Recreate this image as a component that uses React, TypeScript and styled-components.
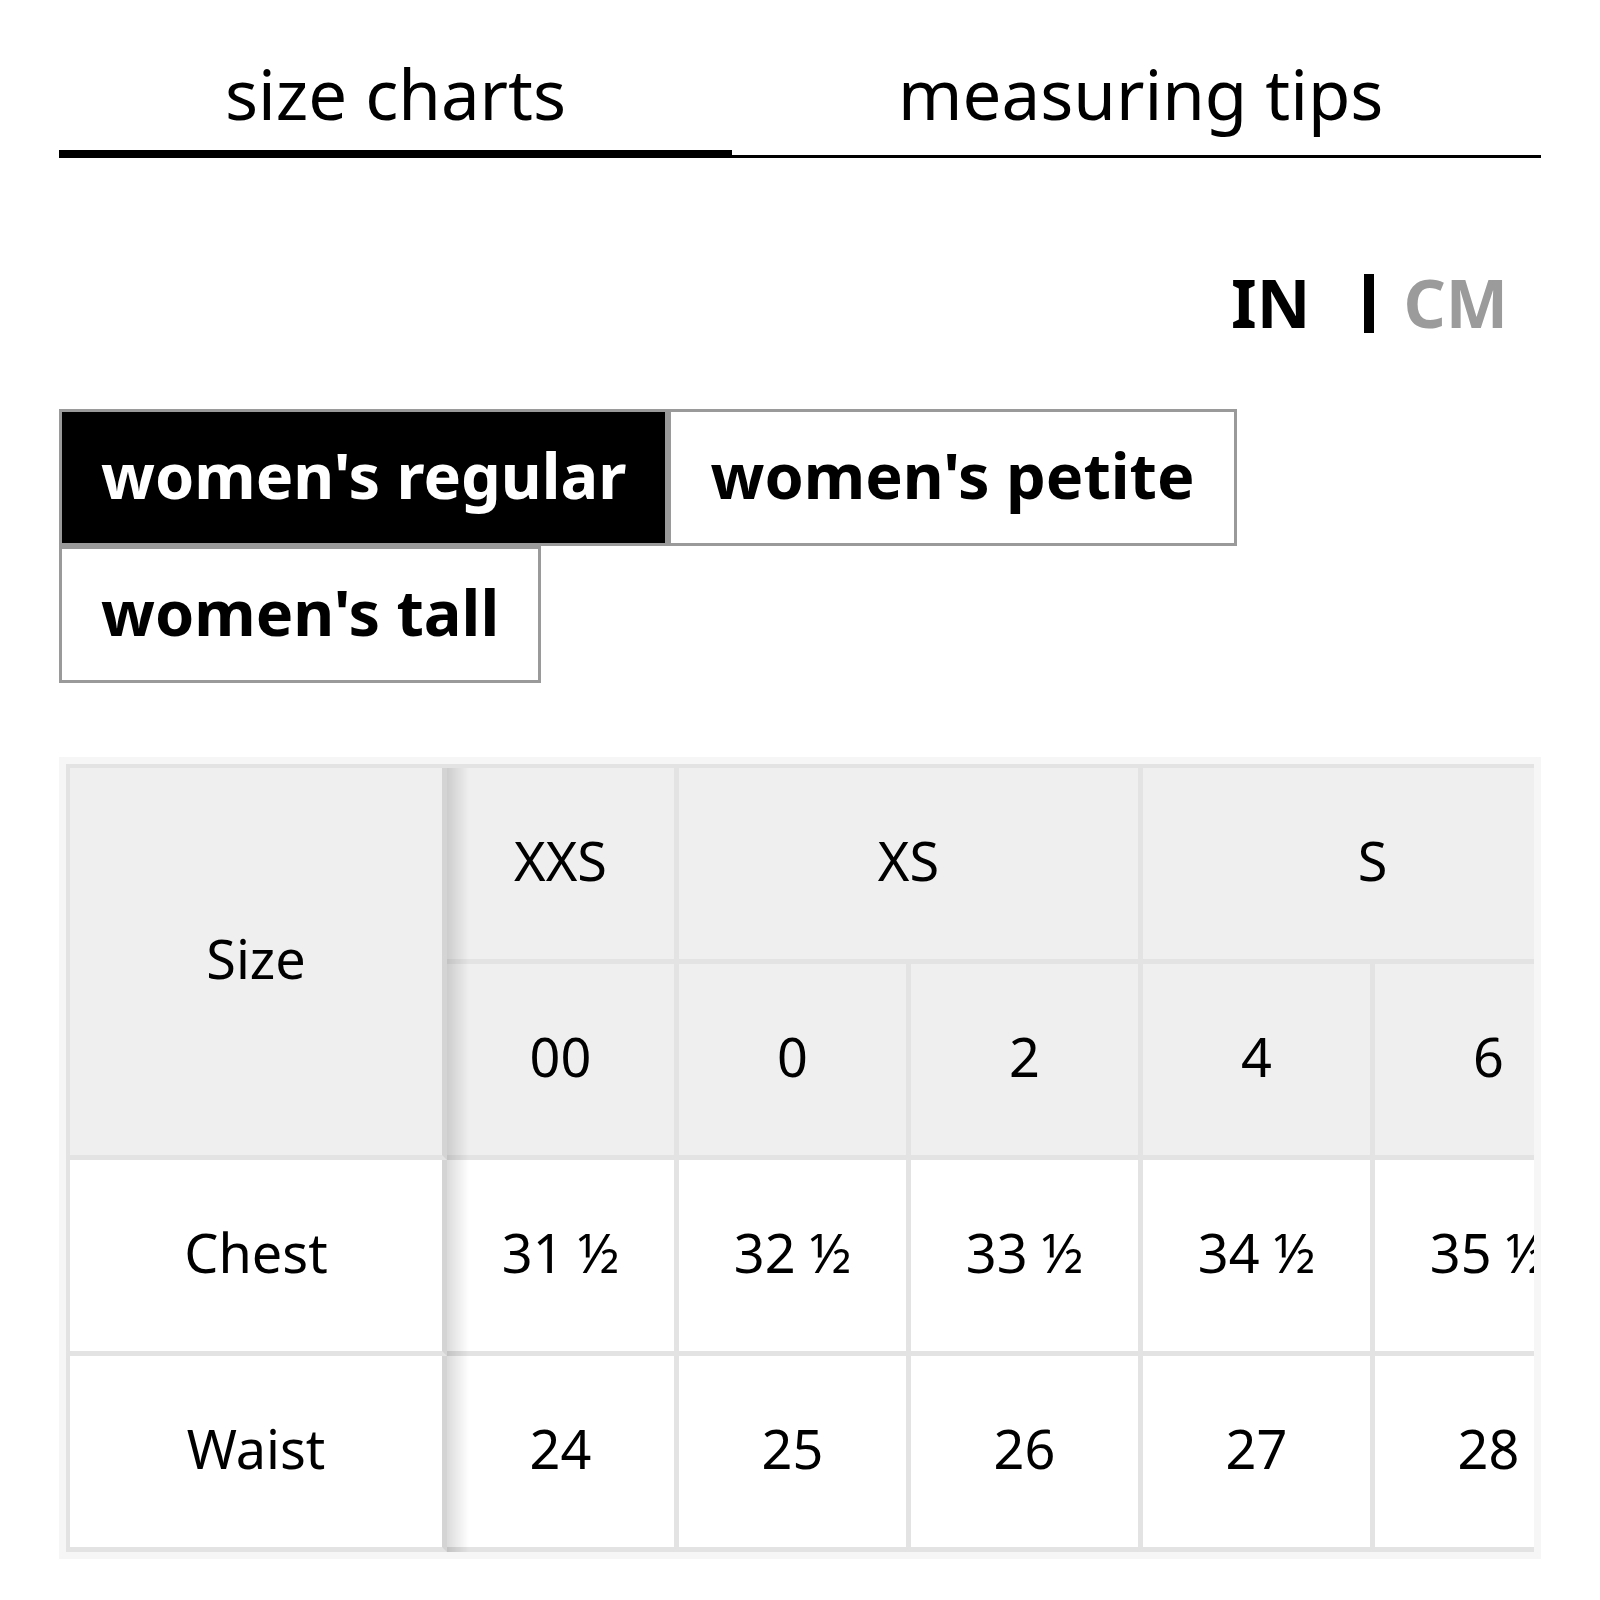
import styled, { createGlobalStyle } from "styled-components";

const GlobalStyle = createGlobalStyle`
  html, body {
    margin: 0;
    padding: 0;
    background: #fff;
  }
  body {
    font-family: "Noto Sans", "Open Sans", sans-serif;
    color: #000;
  }
`;

const Page = styled.div`
  width: 1600px;
  box-sizing: border-box;
  padding: 52px 59px 40px;
`;

const TabList = styled.div`
  display: flex;
  border-bottom: 3px solid #000;
`;

const Tab = styled.div<{ $active?: boolean }>`
  padding: 0 166px 15px;
  font-size: 69px;
  line-height: 1.2;
  font-weight: 400;
  white-space: nowrap;
  border-bottom: 5px solid ${(p) => (p.$active ? "#000" : "transparent")};
`;

const UnitToggle = styled.div`
  display: flex;
  justify-content: flex-end;
  align-items: center;
  margin-top: 111px;
  padding-right: 33px;
  font-size: 66px;
  line-height: 1;
  font-weight: 700;
`;

const Unit = styled.span<{ $active?: boolean }>`
  color: ${(p) => (p.$active ? "#000" : "#9b9b9b")};
`;

const Divider = styled.span`
  display: block;
  width: 10px;
  height: 59px;
  margin: 4px 29px 0 54px;
  background: #000;
`;

const FitList = styled.div`
  display: flex;
  flex-wrap: wrap;
  margin-top: 74px;
`;

const FitButton = styled.button<{ $active?: boolean }>`
  box-sizing: border-box;
  height: 137px;
  padding: 0 39px 6px;
  border: 3px solid #9a9a9a;
  background: ${(p) => (p.$active ? "#000" : "#fff")};
  color: ${(p) => (p.$active ? "#fff" : "#000")};
  font-family: "Noto Sans", "Open Sans", sans-serif;
  font-size: 63px;
  font-weight: 700;
  white-space: nowrap;
  cursor: pointer;
`;

const TableFrame = styled.div`
  margin-top: 74px;
  padding: 7px;
  background: #f6f6f6;
`;

const Scroller = styled.div`
  overflow: hidden;
`;

const Table = styled.table`
  border-collapse: separate;
  border-spacing: 0;
  border-top: 4px solid #e3e3e3;
  border-left: 4px solid #e3e3e3;
  table-layout: fixed;
  font-size: 54px;
`;

const Cell = styled.td<{ $head?: boolean; $sticky?: boolean }>`
  box-sizing: border-box;
  height: 196px;
  width: ${(p) => (p.$sticky ? "377px" : "232px")};
  min-width: ${(p) => (p.$sticky ? "377px" : "232px")};
  padding: 0 0 6px;
  text-align: center;
  vertical-align: middle;
  font-weight: 400;
  white-space: nowrap;
  background: ${(p) => (p.$head ? "#efefef" : "#fff")};
  border-right: 5px solid ${(p) => (p.$sticky ? "#d4d4d4" : "#e3e3e3")};
  border-bottom: 5px solid #e3e3e3;

  ${(p) =>
    p.$sticky &&
    `
    position: sticky;
    left: 0;
    z-index: 2;
    &::after {
      content: "";
      position: absolute;
      top: 0;
      bottom: -5px;
      right: -27px;
      width: 22px;
      background: linear-gradient(to right, rgba(0, 0, 0, 0.14), rgba(0, 0, 0, 0));
      pointer-events: none;
    }
  `}
`;

type Group = { label: string; sizes: string[] };

const groups: Group[] = [
  { label: "XXS", sizes: ["00"] },
  { label: "XS", sizes: ["0", "2"] },
  { label: "S", sizes: ["4", "6"] },
];

const rows = [
  { name: "Chest", values: ["31 ½", "32 ½", "33 ½", "34 ½", "35 ½"] },
  { name: "Waist", values: ["24", "25", "26", "27", "28"] },
];

export default function App() {
  const sizes = groups.flatMap((g) => g.sizes);

  return (
    <>
      <GlobalStyle />
      <Page>
        <TabList>
          <Tab $active>size charts</Tab>
          <Tab>measuring tips</Tab>
        </TabList>

        <UnitToggle>
          <Unit $active>IN</Unit>
          <Divider />
          <Unit>CM</Unit>
        </UnitToggle>

        <FitList>
          <FitButton $active>women's regular</FitButton>
          <FitButton>women's petite</FitButton>
          <FitButton>women's tall</FitButton>
        </FitList>

        <TableFrame>
          <Scroller>
            <Table>
              <tbody>
                <tr>
                  <Cell as="th" $head $sticky rowSpan={2}>
                    Size
                  </Cell>
                  {groups.map((g) => (
                    <Cell as="th" $head key={g.label} colSpan={g.sizes.length}>
                      {g.label}
                    </Cell>
                  ))}
                </tr>
                <tr>
                  {sizes.map((s) => (
                    <Cell as="th" $head key={s}>
                      {s}
                    </Cell>
                  ))}
                </tr>
                {rows.map((r) => (
                  <tr key={r.name}>
                    <Cell $sticky>{r.name}</Cell>
                    {r.values.map((v, i) => (
                      <Cell key={i}>{v}</Cell>
                    ))}
                  </tr>
                ))}
              </tbody>
            </Table>
          </Scroller>
        </TableFrame>
      </Page>
    </>
  );
}
